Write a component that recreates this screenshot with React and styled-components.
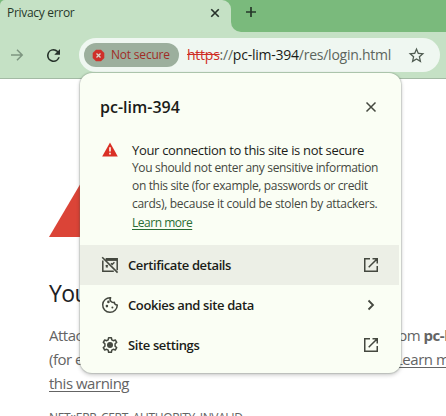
import React from "react";
import styled, { createGlobalStyle } from "styled-components";

const GlobalStyle = createGlobalStyle`
  * { box-sizing: border-box; }
  body { margin: 0; overflow: hidden; background: #fff; font-family: "Open Sans", "Noto Sans", sans-serif; }
`;

const Browser = styled.div`
  position: relative;
  width: 446px;
  height: 416px;
  overflow: hidden;
  display: flex;
  flex-direction: column;
  background: #fff;
`;

const Text = styled.span`
  display: block;
  margin: 0;
  white-space: nowrap;
  font-size: ${(p) => p.$size || 12}px;
  font-weight: ${(p) => p.$weight || 400};
  line-height: ${(p) => p.$line || 18}px;
  letter-spacing: ${(p) => p.$track || 0}px;
  color: ${(p) => p.$color || "#1a1c18"};
`;

const TabStrip = styled.div`
  display: flex;
  flex: none;
  height: 32px;
  background: #c5e1c5;
`;

const StripStart = styled.div`
  width: 231px;
  background: #7aba7c;
`;

const Tab = styled.div`
  display: flex;
  align-items: center;
  justify-content: space-between;
  height: 32px;
  padding: 0 11px 7px 7px;
  background: #c5e1c5;
  border-radius: 5px 9px 0 0;
`;

const StripRest = styled.div`
  flex: 1;
  padding: 6px 0 0 14px;
  background: #7aba7c;
  border-bottom-left-radius: 10px;
`;

const Toolbar = styled.div`
  display: flex;
  align-items: center;
  flex: none;
  height: 47px;
  padding: 0 6px 0 10px;
  background: #c5e1c5;
  border-bottom: 1px solid #a3baa4;
`;

const Nav = styled.div`
  display: flex;
  align-items: center;
  gap: 23px;
  width: 69px;
  flex: none;
`;

const Omnibox = styled.div`
  flex: 1;
  display: flex;
  align-items: center;
  height: 34px;
  padding: 0 14px 0 5px;
  background: #eff7f1;
  border-radius: 17px;
`;

const Chip = styled.div`
  display: flex;
  align-items: center;
  gap: 6px;
  width: 95px;
  height: 24px;
  padding-left: 8px;
  border-radius: 12px;
  background: #9caf9d;
`;

const Url = styled.div`
  flex: 1;
  margin-left: 8px;
  font-size: 14px;
  line-height: 20px;
  letter-spacing: -0.24px;
  white-space: nowrap;
  color: #5c655d;
`;

const Scheme = styled.span`
  color: #cf2d24;
  text-decoration: line-through;
`;

const Host = styled.span`
  color: #1a1c18;
`;

const Page = styled.main`
  flex: 1;
  padding: 97px 0 0 49px;
  color: #646464;
`;

const Heading = styled.h1`
  margin: 41px 0 0;
  font-size: 23px;
  font-weight: 400;
  line-height: 30px;
  letter-spacing: -0.6px;
  white-space: nowrap;
  color: #202124;
`;

const Paragraph = styled.div`
  margin-top: 15px;
  font-size: 15px;
  line-height: 24px;
  letter-spacing: -0.48px;
  white-space: nowrap;
`;

const Line = styled.div`
  display: flex;
`;

const Lead = styled.span`
  flex: none;
  width: ${(p) => p.$width}px;
  overflow: hidden;
`;

const PageLink = styled.span`
  text-decoration: underline;
  text-underline-offset: 2px;
`;

const PopupLink = styled(Text)`
  margin-top: 1px;
  text-decoration: underline;
  text-underline-offset: 2px;
`;

const ErrorCode = styled.div`
  margin-top: 14px;
  font-size: 12px;
  line-height: 18px;
  letter-spacing: -0.36px;
`;

const Popup = styled.section`
  position: absolute;
  left: 80px;
  top: 73px;
  width: 321px;
  height: 300px;
  border-radius: 12px;
  background: #fafef4;
  box-shadow: 0 0 1px 1px rgba(90, 110, 90, 0.22), 0 2px 4px rgba(0, 0, 0, 0.22);
`;

const PopupHeader = styled.header`
  display: flex;
  align-items: center;
  justify-content: space-between;
  height: 68px;
  padding: 0 24px 0 20px;
`;

const Warning = styled.div`
  display: flex;
  height: 104px;
  padding-left: 22px;
  gap: 14px;
`;

const WarningIcon = styled.div`
  width: 16px;
  padding-top: 1px;
`;

const MenuRow = styled.div`
  display: flex;
  align-items: center;
  height: 40px;
  margin-right: 2px;
  padding: 0 18px 0 20px;
  background: ${(p) => (p.$active ? "#ecefe6" : "transparent")};
`;

const RowLabel = styled(Text)`
  flex: 1;
  margin-left: 8px;
`;

const Svg = styled.svg`
  display: block;
  flex: none;
`;

const Cross = ({ size, color, width }) => (
  <Svg width={size} height={size} viewBox="0 0 12 12" fill="none" stroke={color} strokeWidth={width}>
    <path d="M1.5 1.5l9 9M10.5 1.5l-9 9" />
  </Svg>
);

const Plus = () => (
  <Svg width="12" height="12" viewBox="0 0 12 12" stroke="#26382a" strokeWidth="1.7">
    <path d="M6 1v10M1 6h10" />
  </Svg>
);

const Forward = () => (
  <Svg width="14" height="14" viewBox="0 0 14 14" fill="none" stroke="#7d9580" strokeWidth="1.5">
    <path d="M1 7h11M7 1.8L12.2 7 7 12.2" />
  </Svg>
);

const Reload = () => (
  <Svg width="13" height="13" viewBox="4 4 16 16" fill="#26312a">
    <path d="M17.65 6.35A7.96 7.96 0 0 0 12 4a8 8 0 1 0 7.73 10h-2.08A6 6 0 1 1 12 6c1.66 0 3.14.69 4.22 1.78L13 11h7V4z" />
  </Svg>
);

const Star = () => (
  <Svg width="19" height="19" viewBox="0 0 24 24" fill="#505c52">
    <path d="M22 9.24l-7.19-.62L12 2 9.19 8.63 2 9.24l5.46 4.73L5.82 21 12 17.27 18.18 21l-1.63-7.03zM12 15.4l-3.76 2.27 1-4.28-3.32-2.88 4.38-.38L12 6.1l1.71 4.04 4.38.38-3.32 2.88 1 4.28z" />
  </Svg>
);

const DangerOctagon = () => (
  <Svg width="13" height="13" viewBox="0 0 13 13">
    <path d="M4 .7h5L12.3 4v5L9 12.3H4L.7 9V4z" fill="#cf2f2a" />
    <path d="M4.5 4.5l4 4M8.5 4.5l-4 4" stroke="#d9d6cc" strokeWidth="1.3" />
  </Svg>
);

const DangerTriangle = () => (
  <Svg width="16" height="15" viewBox="0 0 16 15">
    <path d="M8 .5L15.8 14.5H.2z" fill="#da3025" />
    <path d="M8 5.2v4.2M8 10.8v1.7" stroke="#fafef4" strokeWidth="1.6" />
  </Svg>
);

const PageTriangle = () => (
  <Svg width="72" height="61" viewBox="0 0 72 61">
    <path d="M36 0L72 61H0z" fill="#db4437" />
  </Svg>
);

const CertificateOff = () => (
  <Svg width="20" height="20" viewBox="0 0 20 20" fill="none" stroke="#44483f">
    <path d="M6 3.8h11.2v11.4" strokeWidth="1.5" />
    <path d="M5.5 4.6h11.7" strokeWidth="2.6" />
    <path d="M2.8 5.5v10.7h11" strokeWidth="1.5" />
    <path d="M2.2 2.2l15.4 15.4" strokeWidth="1.6" />
    <path d="M5.8 10.2l2 2M7.8 10.2l-2 2M11 8.2l1.2 1.2 2.2-2.2" strokeWidth="1.4" />
  </Svg>
);

const Cookie = () => (
  <Svg width="20" height="20" viewBox="0 0 20 20" fill="none" stroke="#44483f" strokeWidth="1.5">
    <path d="M10.6 2.75A7.3 7.3 0 1 0 17.3 10a2.9 2.9 0 0 1-3-2.7 3.1 3.1 0 0 1-3.7-4.55z" strokeLinejoin="round" />
    <g fill="#44483f" stroke="none">
      <circle cx="8.4" cy="6.9" r="1.3" />
      <circle cx="6.9" cy="11.1" r="1.3" />
      <circle cx="12.4" cy="12.5" r="1" />
    </g>
  </Svg>
);

const Gear = () => (
  <Svg width="20" height="20" viewBox="0 0 20 20" fill="none" stroke="#44483f" strokeWidth="1.5" strokeLinejoin="round">
    <path d="M8.6 2.7h2.8l.4 2.1 1.5.9 2-.7 1.4 2.4-1.6 1.4v2.4l1.6 1.4-1.4 2.4-2-.7-1.5.9-.4 2.1H8.6l-.4-2.1-1.5-.9-2 .7-1.4-2.4 1.6-1.4V8.8L3.3 7.4 4.7 5l2 .7 1.5-.9z" />
    <circle cx="10" cy="10" r="3" fill="#44483f" stroke="none" />
  </Svg>
);

const Launch = () => (
  <Svg width="20" height="20" viewBox="0 0 20 20" fill="none" stroke="#44483f" strokeWidth="1.5">
    <path d="M9 3.75H3.75v12.5h12.5V11M11.5 3.75h4.75V8.5M16 4l-8.3 8.3" />
  </Svg>
);

const Chevron = () => (
  <Svg width="20" height="20" viewBox="0 0 20 20" fill="none" stroke="#44483f" strokeWidth="1.8">
    <path d="M7.5 5.5L12 10l-4.5 4.5" />
  </Svg>
);

const MENU = [
  { label: "Certificate details", icon: <CertificateOff />, end: <Launch />, active: true },
  { label: "Cookies and site data", icon: <Cookie />, end: <Chevron /> },
  { label: "Site settings", icon: <Gear />, end: <Launch /> },
];

const DETAILS = [
  { line: "You should not enter any sensitive information", track: -0.34 },
  { line: "on this site (for example, passwords or credit", track: -0.34 },
  { line: "cards), because it could be stolen by attackers.", track: -0.29 },
];

export default function App() {
  return (
    <Browser>
      <GlobalStyle />
      <TabStrip>
        <StripStart>
          <Tab>
            <Text $track={-0.3} $color="#26382a">Privacy error</Text>
            <Cross size={10} color="#26312a" width={2} />
          </Tab>
        </StripStart>
        <StripRest>
          <Plus />
        </StripRest>
      </TabStrip>
      <Toolbar>
        <Nav>
          <Forward />
          <Reload />
        </Nav>
        <Omnibox>
          <Chip>
            <DangerOctagon />
            <Text $weight={500} $track={-0.2} $color="#a02c26">Not secure</Text>
          </Chip>
          <Url>
            <Scheme>https</Scheme>://<Host>pc-lim-394</Host>/res/login.html
          </Url>
          <Star />
        </Omnibox>
      </Toolbar>
      <Page>
        <PageTriangle />
        <Heading>Your connection is not private</Heading>
        <Paragraph>
          <Line>
            <Lead $width={339}>Attackers might be trying to steal your information</Lead>
            <span>from <b>pc-lim-394</b></span>
          </Line>
          <Line>
            <Lead $width={346}>(for example, passwords, messages, or credit cards).</Lead>
            <PageLink>Learn more about</PageLink>
          </Line>
          <PageLink>this warning</PageLink>
        </Paragraph>
        <ErrorCode>NET::ERR_CERT_AUTHORITY_INVALID</ErrorCode>
      </Page>
      <Popup>
        <PopupHeader>
          <Text as="h2" $size={16} $weight={600} $line={22}>pc-lim-394</Text>
          <Cross size={12} color="#44483f" width={1.5} />
        </PopupHeader>
        <Warning>
          <WarningIcon>
            <DangerTriangle />
          </WarningIcon>
          <div>
            <Text $size={13} $track={-0.32}>Your connection to this site is not secure</Text>
            {DETAILS.map(({ line, track }) => (
              <Text key={line} $track={track} $color="#44483f">{line}</Text>
            ))}
            <PopupLink $track={-0.48} $color="#2a6c35">Learn more</PopupLink>
          </div>
        </Warning>
        {MENU.map((row) => (
          <MenuRow key={row.label} $active={row.active}>
            {row.icon}
            <RowLabel $size={13} $weight={600} $track={-0.38}>{row.label}</RowLabel>
            {row.end}
          </MenuRow>
        ))}
      </Popup>
    </Browser>
  );
}
